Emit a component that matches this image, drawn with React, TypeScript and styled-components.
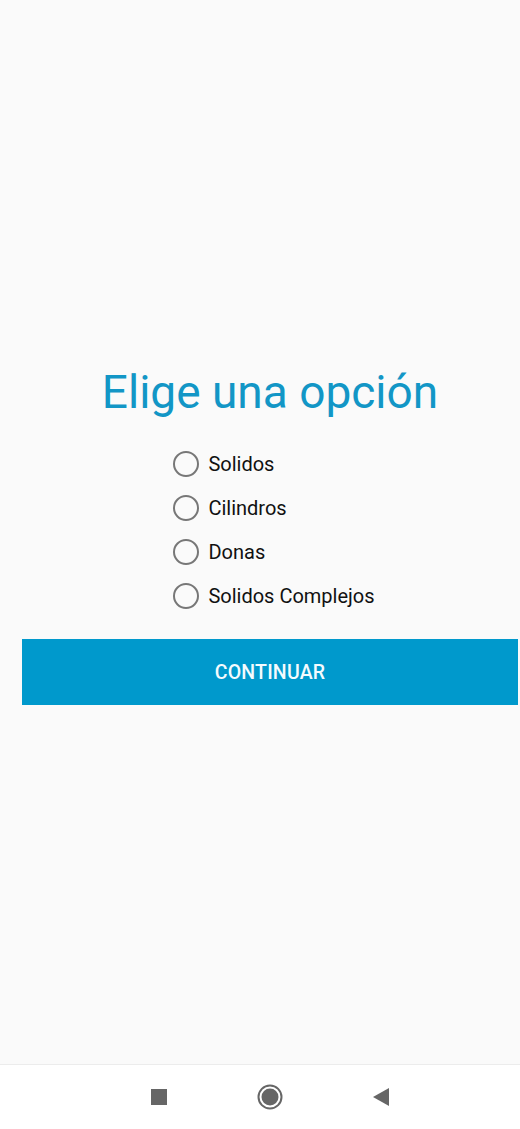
import styled, { createGlobalStyle } from "styled-components";

const GlobalStyle = createGlobalStyle`
  html, body {
    margin: 0;
    padding: 0;
    background: #fafafa;
  }
  body {
    font-family: Roboto, "Noto Sans", sans-serif;
  }
`;

const Screen = styled.div`
  width: 520px;
  height: 1129px;
  display: flex;
  flex-direction: column;
  background: #fafafa;
`;

const Content = styled.main`
  flex: 1;
  display: flex;
  flex-direction: column;
  align-items: center;
  padding: 363px 0 0 20px;
`;

const Title = styled.h1`
  margin: 0;
  font-size: 46px;
  font-weight: 400;
  line-height: 58px;
  color: #1296c6;
`;

const RadioGroup = styled.div`
  display: flex;
  flex-direction: column;
  margin-top: 21px;
  margin-left: 8px;
`;

const Option = styled.label`
  display: flex;
  align-items: center;
  gap: 9px;
  height: 44px;
  font-size: 20px;
  color: #111111;
  cursor: pointer;
`;

const Circle = styled.span<{ $checked?: boolean }>`
  box-sizing: border-box;
  width: 26px;
  height: 26px;
  border-radius: 50%;
  border: 2.5px solid #777777;
  display: flex;
  align-items: center;
  justify-content: center;
  &::after {
    content: "";
    width: 12px;
    height: 12px;
    border-radius: 50%;
    background: ${(p) => (p.$checked ? "#0099cc" : "transparent")};
  }
`;

const ContinueButton = styled.button`
  align-self: stretch;
  margin: 21px 2px 0 2px;
  height: 66px;
  border: none;
  background: #0099cc;
  color: #f4fbfe;
  font-family: Roboto, sans-serif;
  font-size: 19.5px;
  font-weight: 500;
  letter-spacing: 0.2px;
`;

const NavBar = styled.nav`
  height: 64px;
  background: #ffffff;
  border-top: 1px solid #ececec;
  display: flex;
  align-items: center;
  justify-content: center;
  gap: 86px;
  padding-left: 20px;
`;

const options = ["Solidos", "Cilindros", "Donas", "Solidos Complejos"];

export default function App() {
  return (
    <>
      <GlobalStyle />
      <Screen>
        <Content>
          <Title>Elige una opción</Title>
          <RadioGroup>
            {options.map((o) => (
              <Option key={o}>
                <Circle />
                {o}
              </Option>
            ))}
          </RadioGroup>
          <ContinueButton>CONTINUAR</ContinueButton>
        </Content>
        <NavBar>
          <svg width="24" height="24" viewBox="0 0 24 24">
            <rect x="4" y="4" width="16" height="16" fill="#666" />
          </svg>
          <svg width="26" height="26" viewBox="0 0 26 26">
            <circle cx="13" cy="13" r="11.5" fill="none" stroke="#666" strokeWidth="2" />
            <circle cx="13" cy="13" r="8.5" fill="#666" />
          </svg>
          <svg width="24" height="24" viewBox="0 0 24 24">
            <polygon points="4,12 20,3 20,21" fill="#666" />
          </svg>
        </NavBar>
      </Screen>
    </>
  );
}
